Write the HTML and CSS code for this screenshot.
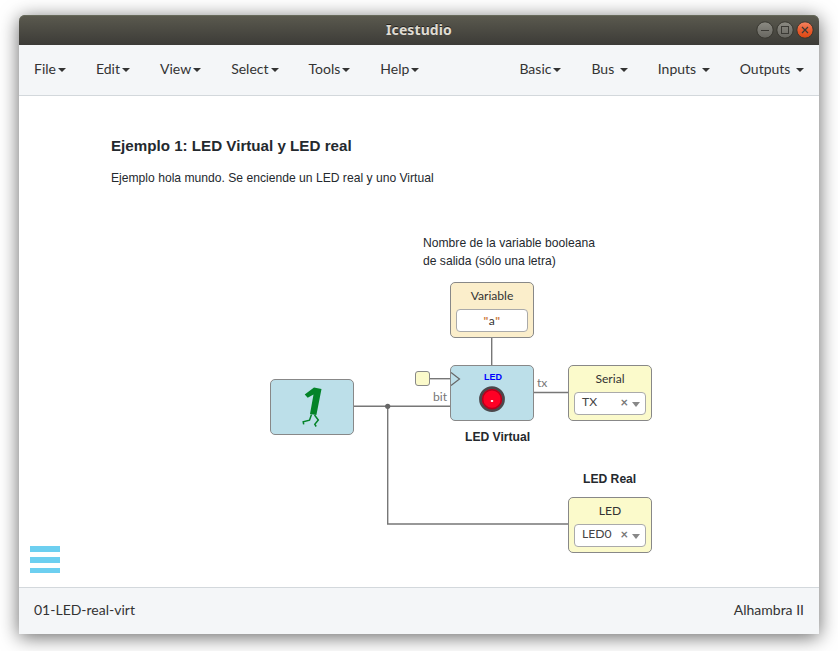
FILE: index.html
```html
<!DOCTYPE html>
<html lang="es">
<head>
<meta charset="utf-8">
<title>Icestudio</title>
<link rel="stylesheet" href="styles.css">
</head>
<body>
<div class="window">
  <header class="titlebar">
    <span class="title">Icestudio</span>
    <svg class="controls" width="60" height="20" viewBox="0 0 60 20">
      <defs>
        <linearGradient id="gray" x1="0" y1="0" x2="0" y2="1"><stop offset="0" stop-color="#8c8b83"/><stop offset="1" stop-color="#66655f"/></linearGradient>
        <linearGradient id="orange" x1="0" y1="0" x2="0" y2="1"><stop offset="0" stop-color="#f58563"/><stop offset="0.5" stop-color="#ea5c2f"/><stop offset="1" stop-color="#dc4812"/></linearGradient>
      </defs>
      <g stroke="#37362f">
        <circle cx="10" cy="10" r="8.2" fill="url(#gray)"/>
        <circle cx="30" cy="10" r="8.2" fill="url(#gray)"/>
        <circle cx="50" cy="10" r="8.2" fill="url(#orange)"/>
      </g>
      <g fill="none" stroke="#3b3a35">
        <path d="M6 10.5h8"/>
        <rect x="26.5" y="6.500" width="7" height="7"/>
        <path d="M47 7l6 6M53 7l-6 6" stroke-width="1.2"/>
      </g>
    </svg>
  </header>
  <nav class="menubar">
    <div class="menu"><a>File<i class="caret"></i></a><a>Edit<i class="caret"></i></a><a>View<i class="caret"></i></a><a>Select<i class="caret"></i></a><a>Tools<i class="caret"></i></a><a>Help<i class="caret"></i></a></div>
    <div class="menu"><a>Basic<i class="caret"></i></a><a>Bus <i class="caret"></i></a><a>Inputs <i class="caret"></i></a><a>Outputs <i class="caret"></i></a></div>
  </nav>
  <main class="canvas">
    <svg class="wires" width="800" height="491" viewBox="0 0 800 491">
      <g fill="none" stroke="#777" stroke-width="1.4">
        <path d="M334 310.300H432"/>
        <path d="M368.700 310V428H550"/>
        <path d="M472.700 241V270"/>
        <path d="M410 282.700H432"/>
        <path d="M514 296.500H550"/>
      </g>
      <circle cx="368.700" cy="310.300" r="2.600" fill="#666"/>
    </svg>

    <section class="note intro">
      <h1>Ejemplo 1: LED Virtual y LED real</h1>
      <p>Ejemplo hola mundo. Se enciende un LED real y uno Virtual</p>
    </section>
    <p class="note hint">Nombre de la variable booleana<br>de salida (sólo una letra)</p>
    <p class="note virtual-label">LED Virtual</p>
    <p class="note real-label">LED Real</p>
    <span class="port bit">bit</span>
    <span class="port tx">tx</span>

    <div class="block variable"><span>Variable</span><div class="field constant"><b>"</b>a<b>"</b></div></div>
    <div class="block one">
      <svg width="82" height="54" viewBox="0 0 82 54">
        <path d="M33.700 14.500L43 7.500L50.500 9L45.400 35L39 34L42.500 14.500L36.700 17.800Z" fill="#048328"/>
        <path d="M40.500 34.500L38.500 40.200L32.200 41.700L32.700 44.300M43.500 35L47.300 40L43.800 44.300L45.200 46.500" fill="none" stroke="#048328" stroke-width="1.500"/>
      </svg>
    </div>
    <div class="clock"></div>
    <div class="block led">
      <span class="led-name">LED</span>
      <svg width="82" height="54" viewBox="0 0 82 54">
        <path d="M0 6.500L8.500 13L0 19.500" fill="none" stroke="#666" stroke-width="1.200"/>
        <circle cx="41" cy="33.200" r="11.500" fill="#ff0025" stroke="#4b484c" stroke-width="2.800"/>
        <circle cx="41" cy="33.200" r="9.400" fill="none" stroke="#b4001c" stroke-width="1.600"/>
        <ellipse cx="41" cy="35" rx="1.300" ry="1" fill="#fff"/>
      </svg>
    </div>
    <div class="block output serial"><span>Serial</span><div class="field select">TX<i class="clear">×</i><i class="arrow"></i></div></div>
    <div class="block output real"><span>LED</span><div class="field select">LED0<i class="clear">×</i><i class="arrow"></i></div></div>

    <div class="toggle"><i></i><i></i><i></i></div>
  </main>
  <footer class="status"><span>01-LED-real-virt</span><span>Alhambra II</span></footer>
</div>
</body>
</html>
```
FILE: styles.css
```css
* { box-sizing: border-box; }
body {
  margin: 0;
  padding: 15px 19px 17px;
  height: 651px;
  overflow: hidden;
  background: #fff;
  color: #333;
  font: 14px Lato, sans-serif;
}
i { font-style: normal; }
.window {
  display: flex;
  flex-direction: column;
  height: 619px;
  border-radius: 6px 6px 0 0;
  box-shadow: 0 3px 19px rgba(0, 0, 0, .6);
}
.titlebar {
  display: grid;
  grid-template-columns: 1fr auto 1fr;
  align-items: center;
  height: 30px;
  padding-right: 4px;
  padding-left: 4px;
  border-radius: 6px 6px 0 0;
  background: linear-gradient(#5b5a4f, #3c3b37);
  box-shadow: inset 0 1px #66695a;
}
.title {
  grid-column: 2;
  padding-bottom: 2px;
  color: #dfdbd2;
  font: bold 14px "Noto Sans", sans-serif;
  letter-spacing: .1px;
  text-shadow: 0 -1px #22221f;
}
.controls { justify-self: end; }
.menubar {
  display: flex;
  justify-content: space-between;
  height: 51px;
  background: #f4f6f8;
  border-bottom: 1px solid #d3d8dc;
}
.menu { display: flex; }
.menu a { padding: 0 15px; line-height: 47px; white-space: pre; }
.caret {
  display: inline-block;
  margin-left: 2px;
  vertical-align: middle;
  border-top: 4px solid #333;
  border-right: 4px solid transparent;
  border-left: 4px solid transparent;
}
.canvas { position: relative; height: 491px; background: #fff; }
.wires { display: block; }
.note {
  position: absolute;
  margin: 0;
  font: 12.14px/18px "Liberation Sans", sans-serif;
  color: #24292e;
  white-space: nowrap;
}
.intro { left: 92px; top: 40px; }
.intro h1 { margin: 0 0 14px; font-size: 15.17px; line-height: 19px; }
.intro p { margin: 0; }
.hint { left: 404px; top: 138px; }
.virtual-label, .real-label { font-weight: bold; }
.virtual-label { left: 446px; top: 332px; }
.real-label { left: 564px; top: 374px; }
.port { position: absolute; color: #777; font-size: 12.14px; line-height: 16px; }
.bit { left: 414px; top: 293px; }
.tx { left: 518px; top: 279px; }
.block {
  position: absolute;
  width: 84px;
  height: 56px;
  border: 1px solid #888;
  border-radius: 5px;
  background: #bcdfe9;
  font-size: 12.14px;
  line-height: 16px;
  text-align: center;
  color: #333;
}
.block > span { display: block; padding-top: 5px; }
.block svg { display: block; }
.variable { left: 431px; top: 186px; background: #fbeecb; }
.one { left: 251px; top: 283px; }
.led { left: 431px; top: 269px; }
.led .led-name {
  position: absolute;
  left: 2px;
  right: 0;
  top: 3px;
  padding: 0;
  color: #00f;
  font: bold 9px/16px "Liberation Sans", sans-serif;
}
.output { background: #fbfacb; }
.serial { left: 549px; top: 269px; }
.real { left: 549px; top: 401px; }
.clock {
  position: absolute;
  left: 396px;
  top: 275px;
  width: 15px;
  height: 15px;
  border: 1px solid #888;
  border-radius: 3px;
  background: #fbfacb;
}
.field {
  height: 23px;
  margin: 5px 5px 0;
  border: 1px solid #aaa;
  border-radius: 4px;
  background: #fff;
  line-height: 22px;
}
.constant { letter-spacing: .4px; }
.constant b { color: #cf7f45; font-weight: bold; }
.select {
  display: flex;
  align-items: flex-start;
  padding: 0 5px 0 7px;
  line-height: 18px;
  color: #444;
}
.clear { margin-left: auto; color: #777; font-weight: bold; font-size: 13px; }
.arrow {
  margin: 9px 0 0 4px;
  border-top: 5px solid #888;
  border-right: 4px solid transparent;
  border-left: 4px solid transparent;
}
.toggle {
  position: absolute;
  left: 11px;
  top: 450px;
  display: grid;
  gap: 5px;
  width: 30px;
}
.toggle i { height: 6px; background: #6dcff0; }
.toggle i:last-child { height: 5px; }
.status {
  display: flex;
  flex: 1;
  align-items: center;
  justify-content: space-between;
  padding: 0 15px 3px;
  background: #f4f6f8;
  border-top: 1px solid #d3d8dc;
}
```
